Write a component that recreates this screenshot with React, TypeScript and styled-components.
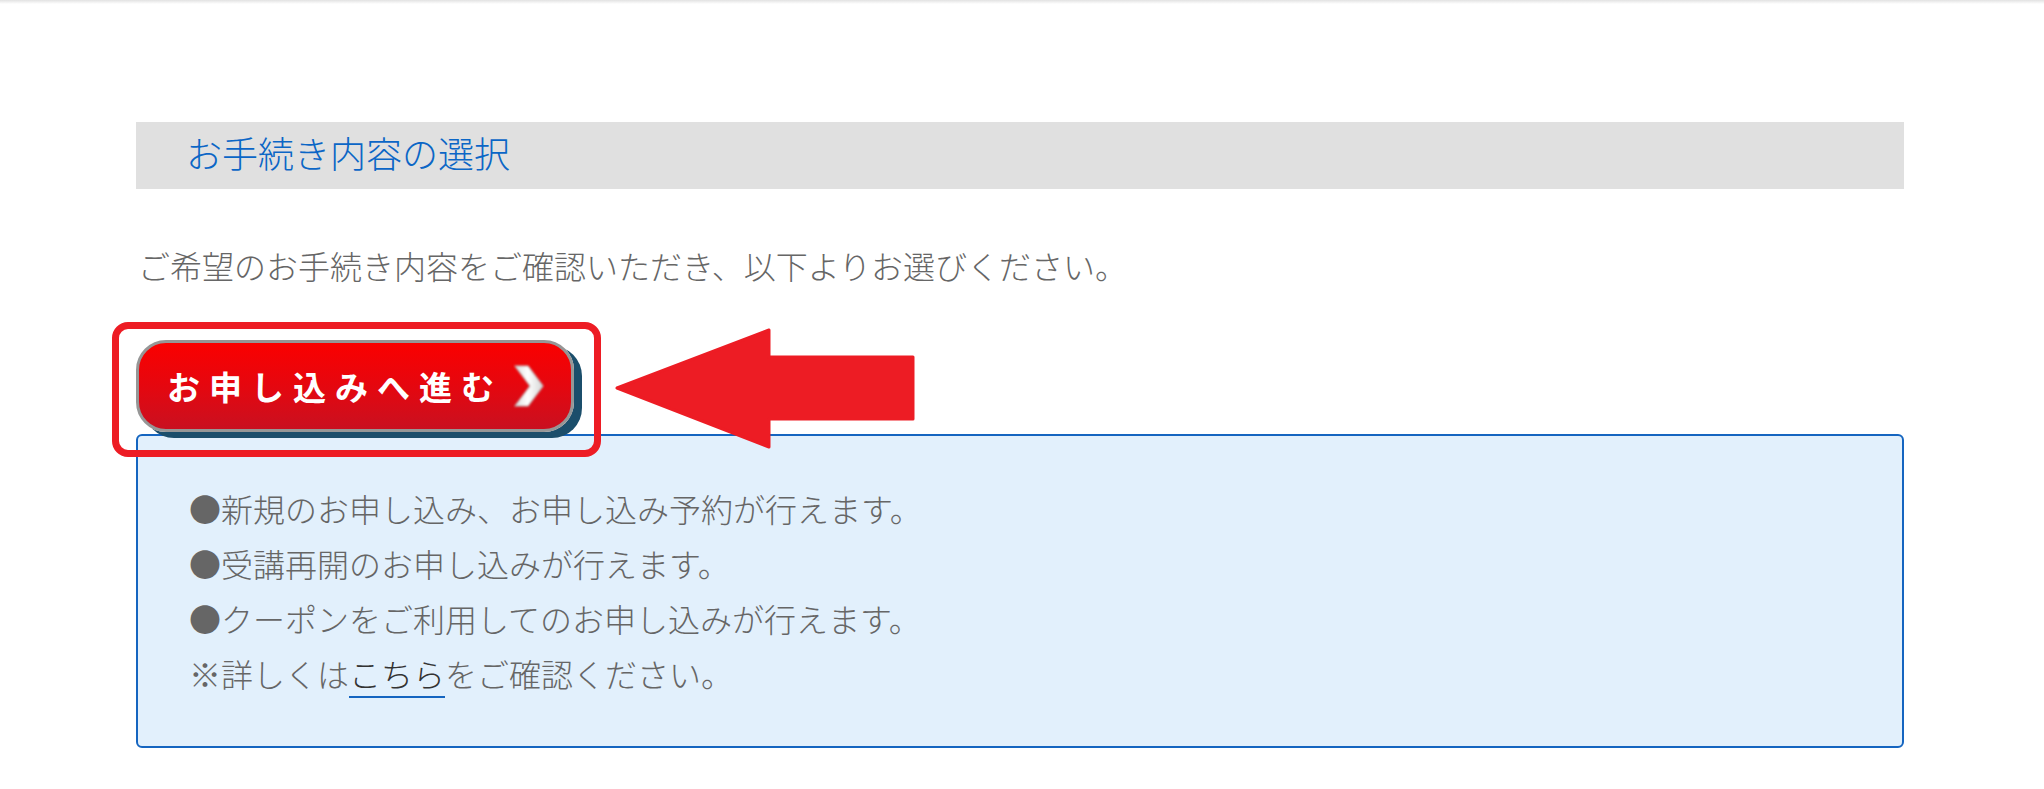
import React from "react";
import styled, { createGlobalStyle } from "styled-components";

const GlobalStyle = createGlobalStyle`
  body {
    margin: 0;
    background: #ffffff;
    font-family: "Noto Sans CJK JP", "Noto Sans", sans-serif;
  }
`;

const TopShade = styled.div`
  height: 4px;
  background: linear-gradient(#e2e2e2, #ffffff);
`;

const Main = styled.main`
  padding: 118px 140px 40px 136px;
`;

const SectionTitle = styled.h2`
  margin: 0;
  height: 67px;
  box-sizing: border-box;
  padding: 0 0 7px 50px;
  background-color: #e0e0e0;
  color: #0b66c6;
  font-size: 36px;
  font-weight: 300;
  line-height: 60px;
`;

const Lead = styled.p`
  margin: 53px 0 0 2px;
  color: #666666;
  font-size: 32px;
  font-weight: 300;
  line-height: 46px;
`;

const ButtonRow = styled.div`
  position: relative;
  margin-top: 52px;
  height: 92px;
`;

const ApplyButton = styled.button`
  display: flex;
  align-items: center;
  gap: 10px;
  box-sizing: border-box;
  width: 438px;
  height: 92px;
  padding: 0 0 0 28px;
  border: 3px solid #969696;
  border-radius: 30px;
  background: linear-gradient(#fa0000 0%, #e5070f 50%, #c91020 100%);
  box-shadow: 8px 6px 0 #1b4e6b;
  color: #ffffff;
  font-family: "Noto Sans CJK JP", sans-serif;
  font-size: 33px;
  font-weight: 700;
  letter-spacing: 9px;
  cursor: pointer;
`;

const Highlight = styled.div`
  position: absolute;
  left: -24px;
  top: -18px;
  width: 489px;
  height: 135px;
  box-sizing: border-box;
  border: 7px solid #ed1c24;
  border-radius: 16px;
  pointer-events: none;
`;

const Pointer = styled.svg`
  position: absolute;
  left: 479px;
  top: -12px;
  z-index: 2;
`;

const InfoBox = styled.div`
  margin-top: 2px;
  padding: 45px 51px;
  border: 2px solid #1565c0;
  border-radius: 6px;
  background-color: #e2f0fc;
`;

const InfoLine = styled.p`
  margin: 0;
  color: #666666;
  font-size: 32px;
  font-weight: 300;
  line-height: 55px;
`;

const TextLink = styled.a`
  color: #333333;
  text-decoration: none;
  border-bottom: 2px solid #1565c0;
`;

const Chevron = () => (
  <svg width="32" height="46" viewBox="0 0 32 46">
    <defs>
      <linearGradient id="chev" x1="0" y1="0" x2="1" y2="0">
        <stop offset="0" stopColor="#dcdcdc" />
        <stop offset="0.45" stopColor="#ffffff" />
        <stop offset="1" stopColor="#d6d6d6" />
      </linearGradient>
      <filter id="soft" x="-20%" y="-20%" width="140%" height="140%">
        <feGaussianBlur stdDeviation="0.9" />
      </filter>
    </defs>
    <polygon
      points="2,3 15,3 30,23 15,43 2,43 17,23"
      fill="url(#chev)"
      stroke="#bdbdbd"
      strokeWidth="1.2"
      strokeLinejoin="round"
      filter="url(#soft)"
    />
  </svg>
);

const lines = [
  "●新規のお申し込み、お申し込み予約が行えます。",
  "●受講再開のお申し込みが行えます。",
  "●クーポンをご利用してのお申し込みが行えます。",
];

export default function App() {
  return (
    <>
      <GlobalStyle />
      <TopShade />
      <Main>
        <SectionTitle>お手続き内容の選択</SectionTitle>
        <Lead>ご希望のお手続き内容をご確認いただき、以下よりお選びください。</Lead>
        <ButtonRow>
          <ApplyButton type="button">
            お申し込みへ進む
            <Chevron />
          </ApplyButton>
          <Highlight />
          <Pointer width="300" height="121" viewBox="0 0 300 121">
            <polygon
              points="2,60 154,2 154,29 298,29 298,91 154,91 154,119"
              fill="#ed1c24"
              stroke="#ed1c24"
              strokeWidth="3"
              strokeLinejoin="round"
            />
          </Pointer>
        </ButtonRow>
        <InfoBox>
          {lines.map((line) => (
            <InfoLine key={line}>{line}</InfoLine>
          ))}
          <InfoLine>
            ※詳しくは<TextLink href="#">こちら</TextLink>をご確認ください。
          </InfoLine>
        </InfoBox>
      </Main>
    </>
  );
}
